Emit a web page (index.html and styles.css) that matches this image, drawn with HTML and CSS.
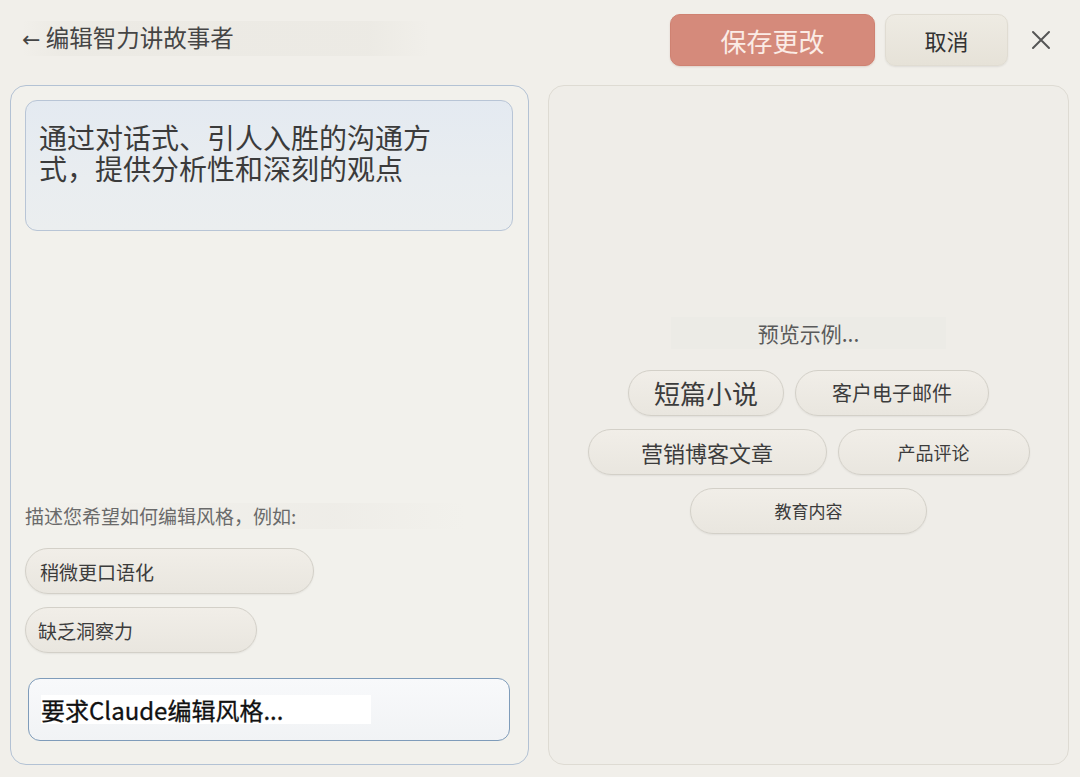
FILE: index.html
```html
<!DOCTYPE html>
<html lang="zh-CN">
<head>
<meta charset="utf-8">
<title>编辑智力讲故事者</title>
<link rel="stylesheet" href="styles.css">
</head>
<body>
<div class="app">
  <header class="topbar">
    <div class="title"><span class="arrow">←</span> 编辑智力讲故事者</div>
    <div class="actions">
      <button class="btn btn-save">保存更改</button>
      <button class="btn btn-cancel">取消</button>
      <button class="btn-close" aria-label="关闭">
        <svg width="22" height="22" viewBox="0 0 22 22"><path d="M3 3 L19 19 M19 3 L3 19" stroke="#555" stroke-width="2" stroke-linecap="round" fill="none"/></svg>
      </button>
    </div>
  </header>
  <main class="main">
    <section class="panel panel-edit">
      <div class="desc">
        <p>通过对话式、引人入胜的沟通方式，提供分析性和深刻的观点</p>
      </div>
      <div class="bottom">
        <div class="hint">描述您希望如何编辑风格，例如:</div>
        <div class="chip chip-sug chip-sug-1">稍微更口语化</div>
        <div class="chip chip-sug chip-sug-2">缺乏洞察力</div>
        <div class="input"><span class="placeholder">要求Claude编辑风格...</span></div>
      </div>
    </section>
    <section class="panel panel-preview">
      <div class="preview-label">预览示例...</div>
      <div class="chip-row">
        <div class="chip chip-ex ex-story">短篇小说</div>
        <div class="chip chip-ex ex-mail">客户电子邮件</div>
      </div>
      <div class="chip-row">
        <div class="chip chip-ex ex-blog">营销博客文章</div>
        <div class="chip chip-ex ex-review">产品评论</div>
      </div>
      <div class="chip-row">
        <div class="chip chip-ex ex-edu">教育内容</div>
      </div>
    </section>
  </main>
</div>
</body>
</html>
```

FILE: styles.css
```css
* { box-sizing: border-box; }
html, body { margin: 0; padding: 0; }
body {
  background: #f1efea;
  font-family: "Noto Sans CJK SC", "Noto Sans", "Liberation Sans", sans-serif;
  color: #3a3a3a;
  width: 1080px;
  height: 777px;
  overflow: hidden;
}
.app {
  display: flex;
  flex-direction: column;
  height: 777px;
  padding: 14px 11px 12px 10px;
}
.topbar {
  display: flex;
  align-items: center;
  justify-content: space-between;
  height: 52px;
  margin-bottom: 19px;
}
.title {
  margin-left: 12px;
  margin-top: -3px;
  font-size: 23.5px;
  line-height: 32px;
  color: #454545;
  padding: 0 195px 0 0;
  background: linear-gradient(90deg, rgba(235,233,227,0.0), rgba(235,233,227,0.8) 10%, rgba(235,233,227,0.8) 85%, rgba(235,233,227,0));
}
.arrow { font-family: "DejaVu Sans", sans-serif; font-size: 22px; }
.actions {
  display: flex;
  align-items: center;
}
.btn {
  height: 52px;
  border-radius: 10px;
  font-family: inherit;
  cursor: pointer;
  padding: 0;
}
.btn-save {
  width: 205px;
  background: #d58a7b;
  border: 1px solid #cf8272;
  color: #fbece6;
  font-size: 26px;
  box-shadow: 0 1px 2px rgba(150,90,70,0.2);
}
.btn-cancel {
  width: 123px;
  margin-left: 10px;
  background: linear-gradient(180deg, #eeebe3, #e6e2d8);
  border: 1px solid #e0dcd2;
  color: #333;
  font-size: 22px;
  box-shadow: 0 1px 2px rgba(0,0,0,0.08);
}
.btn-close {
  width: 22px;
  height: 22px;
  margin: 0 17px 0 22px;
  padding: 0;
  border: 0;
  background: none;
  display: flex;
}
.main {
  flex: 1;
  display: flex;
  gap: 19px;
  min-height: 0;
}
.panel {
  border-radius: 16px;
}
.panel-edit {
  width: 519px;
  border: 1.5px solid #b3c2d4;
  background: #f2f1ec;
  display: flex;
  flex-direction: column;
  justify-content: space-between;
  padding: 14px 15px 23px 14px;
}
.desc {
  height: 131px;
  border: 1px solid #b8c5d6;
  border-radius: 12px;
  background: linear-gradient(180deg, #e4eaf1 0%, #e9edf0 60%, #ebeeef 100%);
  padding: 21px 13px 0 13px;
}
.desc p {
  margin: 0;
  max-width: 400px;
  font-size: 28px;
  line-height: 31px;
  color: #3b3b3b;
}
.bottom {
  display: flex;
  flex-direction: column;
  align-items: flex-start;
}
.hint {
  font-size: 19px;
  line-height: 26px;
  color: #6a6a6a;
  margin-bottom: 19px;
  width: 440px;
  background: linear-gradient(90deg, rgba(236,234,229,0), rgba(236,234,229,0.6) 70%, rgba(236,234,229,0));
}
.chip {
  display: flex;
  align-items: center;
  border-radius: 999px;
  border: 1px solid #d3d0c8;
  background: linear-gradient(180deg, #f1eee8 0%, #e9e6df 100%);
  box-shadow: 0 1px 2px rgba(0,0,0,0.06);
  color: #3c3c3c;
}
.chip-sug {
  height: 46px;
  font-size: 19px;
  padding-left: 14px;
}
.chip-sug-1 { width: 289px; margin-bottom: 13px; }
.chip-sug-2 { width: 232px; padding-left: 12px; margin-bottom: 25px; }
.input {
  align-self: stretch;
  margin: 0 3px 0 3px;
  height: 63px;
  border: 1.5px solid #7f9cba;
  border-radius: 12px;
  background: linear-gradient(180deg, #f8f9fb, #f1f3f5);
  display: flex;
  align-items: center;
  padding-left: 12px;
}
.placeholder {
  display: inline-block;
  width: 330px;
  background: #ffffff;
  font-size: 24px;
  line-height: 29px;
  font-weight: 400;
  color: #111;
  -webkit-text-stroke: 0.3px #111;
}
.panel-preview {
  flex: 1;
  border: 1.5px solid #dedbd3;
  background: #efede8;
  display: flex;
  flex-direction: column;
  align-items: center;
  justify-content: center;
  padding-bottom: 0;
}
.preview-label {
  font-size: 21px;
  line-height: 32px;
  color: #5a5a5a;
  width: 275px;
  text-align: center;
  background: #ecebe6;
  margin-bottom: 21px;
}
.chip-row {
  display: flex;
  gap: 11px;
  margin-bottom: 13px;
}
.chip-row:last-child { margin-bottom: 0; }
.chip-ex {
  height: 46px;
  justify-content: center;
}
.ex-story { width: 156px; font-size: 26px; }
.ex-mail { width: 194px; font-size: 20px; }
.ex-blog { width: 239px; font-size: 22px; }
.ex-review { width: 192px; font-size: 18px; }
.ex-edu { width: 237px; font-size: 17px; }
```
